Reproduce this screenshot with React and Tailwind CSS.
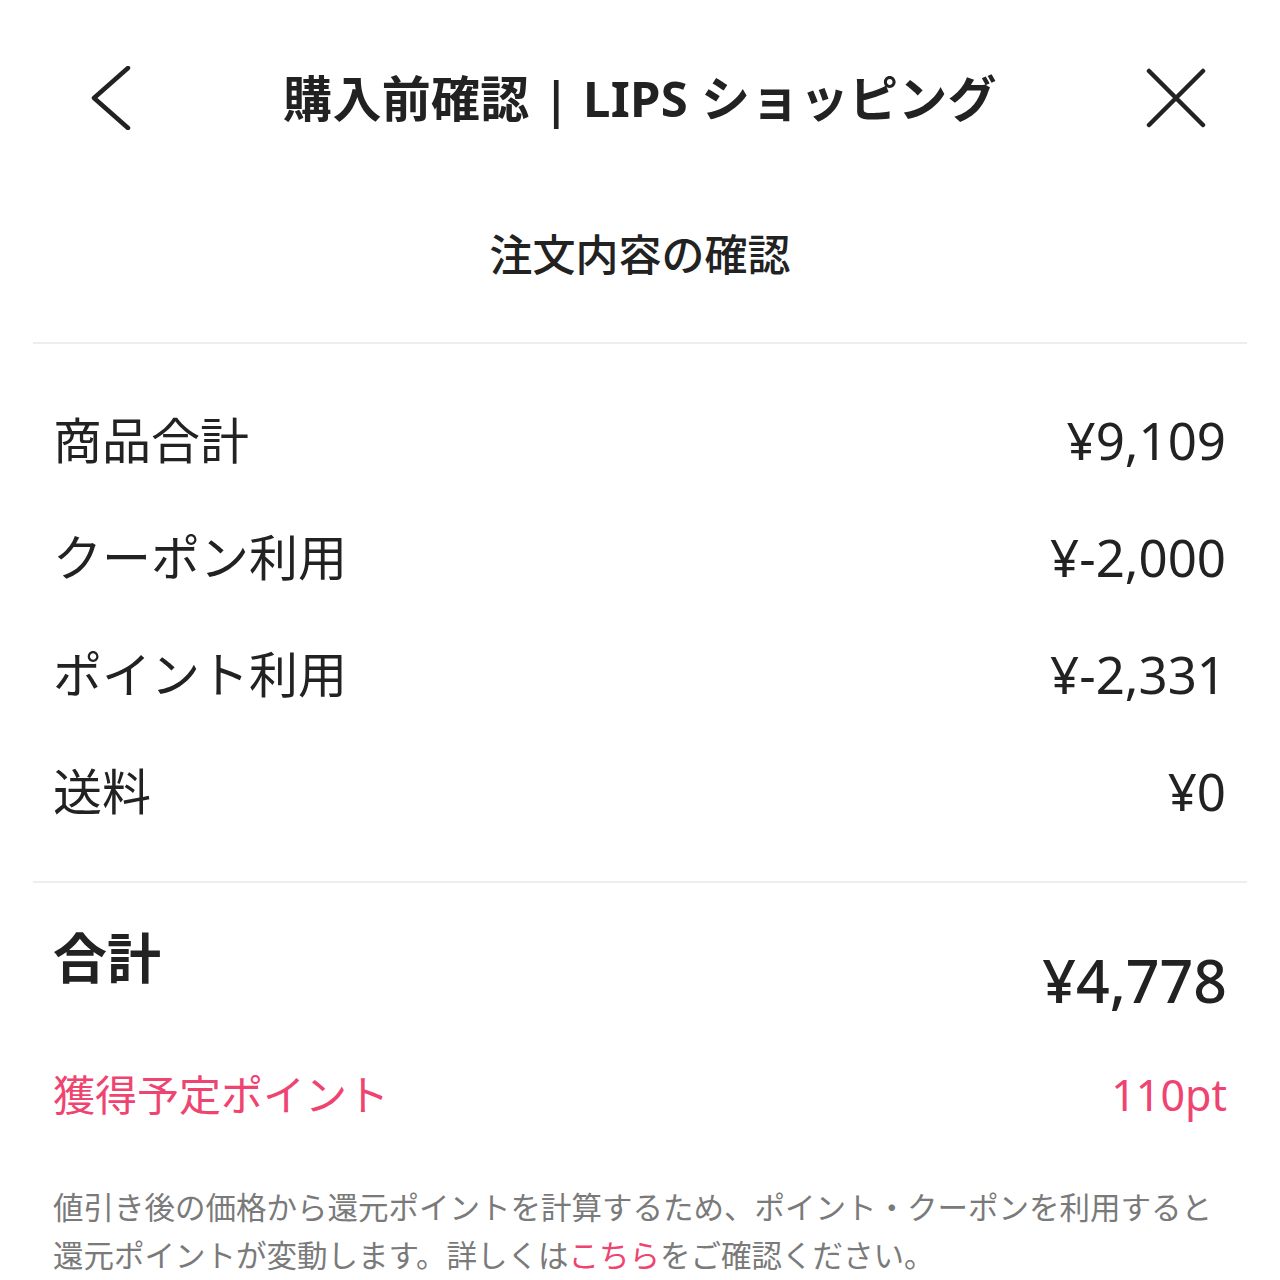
const rows = [
  { label: "商品合計", value: "¥9,109" },
  { label: "クーポン利用", value: "¥-2,000" },
  { label: "ポイント利用", value: "¥-2,331" },
  { label: "送料", value: "¥0" },
];

function App() {
  return (
    <div
      className="min-h-screen bg-white text-[#222222] overflow-hidden"
      style={{ fontFamily: '"Noto Sans", "Noto Sans CJK JP", sans-serif' }}
    >
      {/* header */}
      <header className="grid grid-cols-[1fr_auto_1fr] items-center h-[196px]">
        <div className="flex justify-start pl-[88px]">
          <svg width="44" height="64" viewBox="0 0 44 64" fill="none">
            <path d="M40 2 L6 32 L40 62" stroke="#222" strokeWidth="4.5" strokeLinecap="round" strokeLinejoin="round" />
          </svg>
        </div>
        <h1 className="text-[49px] font-bold leading-[60px] tracking-[0.3px]">
          購入前確認 <span className="font-semibold">|</span> LIPS ショッピング
        </h1>
        <div className="flex justify-end pr-[74px]">
          <svg width="60" height="60" viewBox="0 0 60 60" fill="none">
            <path d="M3 3 L57 57 M57 3 L3 57" stroke="#222" strokeWidth="4.5" strokeLinecap="round" />
          </svg>
        </div>
      </header>

      <h2 className="text-center text-[43px] font-medium leading-[50px] pt-[34px] mb-[62px]">注文内容の確認</h2>

      <div className="mx-[33px] h-[2px] bg-[#eeeeee]" />

      {/* breakdown */}
      <div className="px-[53px] pt-[37px] pb-[32px]">
        {rows.map((r) => (
          <div key={r.label} className="flex items-center justify-between h-[117px] leading-[60px]">
            <span className="text-[49px]">{r.label}</span>
            <span className="text-[51px] pr-[1px]">{r.value}</span>
          </div>
        ))}
      </div>

      <div className="mx-[33px] h-[2px] bg-[#eeeeee]" />

      <div className="px-[53px]">
        <div className="flex items-start justify-between pt-[45px]">
          <span className="text-[54px] font-bold leading-[60px]">合計</span>
          <span className="text-[59px] font-medium leading-[60px] mt-[22px]">¥4,778</span>
        </div>

        <div className="flex items-center justify-between mt-[60px] leading-[50px] text-[#ef4470]">
          <span className="text-[42px]">獲得予定ポイント</span>
          <span className="text-[43px]">110pt</span>
        </div>

        <p className="mt-[63px] text-[30.5px] leading-[48px] text-[#7a7a7a]">
          値引き後の価格から還元ポイントを計算するため、ポイント・クーポンを利用すると還元ポイントが変動します。詳しくは
          <span className="text-[#ef4470]">こちら</span>
          をご確認ください。
        </p>
      </div>
    </div>
  );
}

export default App;
